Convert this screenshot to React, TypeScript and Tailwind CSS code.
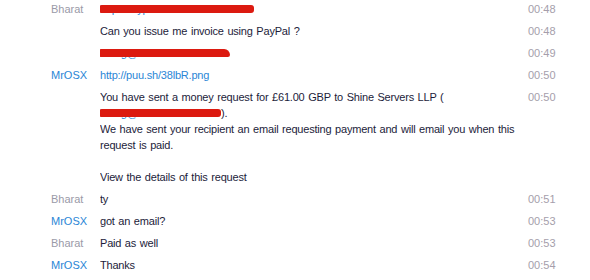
import React from "react";

type Row = {
  name?: string;
  me?: boolean;
  time?: string;
  lines: React.ReactNode[];
};

const Redact = ({ w, top, extra = "" }: { w: number; top: number; extra?: string }) => (
  <span
    className={`absolute left-[-1px] h-[8px] bg-[#dc1a10] rounded-[3px] ${extra}`}
    style={{ width: w, top }}
  />
);

const rows: Row[] = [
  {
    name: "Bharat",
    time: "00:48",
    lines: [
      <span className="relative inline-block text-[#2a86d6]">
        http://tinypic.com/r/9USB-El
        <Redact w={155} top={4} />
      </span>,
    ],
  },
  { time: "00:48", lines: ["Can you issue me invoice using PayPal ?"] },
  {
    time: "00:49",
    lines: [
      <span className="relative inline-block text-[#2a86d6]">
        billing@shineserver
        <Redact w={131} top={4} extra="rounded-tr-[8px]" />
      </span>,
    ],
  },
  {
    name: "MrOSX",
    me: true,
    time: "00:50",
    lines: [<span className="text-[#2a86d6]">http://puu.sh/38lbR.png</span>],
  },
  {
    time: "00:50",
    lines: [
      "You have sent a money request for £61.00 GBP to Shine Servers LLP (",
      <span>
        <span className="relative inline-block w-[121px] text-[#2a86d6]">
          billing@shineserve
          <Redact w={122} top={4} />
        </span>
        ).
      </span>,
      "We have sent your recipient an email requesting payment and will email you when this",
      "request is paid.",
      "\u00a0",
      "View the details of this request",
    ],
  },
  { name: "Bharat", time: "00:51", lines: ["ty"] },
  { name: "MrOSX", me: true, time: "00:53", lines: ["got an email?"] },
  { name: "Bharat", time: "00:53", lines: ["Paid as well"] },
  { name: "MrOSX", me: true, time: "00:54", lines: ["Thanks"] },
];

export default function App() {
  return (
    <div
      className="w-[590px] h-[280px] overflow-hidden bg-white text-[11px] leading-[16px]"
      style={{ fontFamily: '"Liberation Sans", Arial, sans-serif' }}
    >
      <div className="-mt-[2px] flex flex-col">
        {rows.map((r, i) => (
          <div key={i} className="flex py-[3px]">
            <div
              className={`w-[100px] pl-[51px] shrink-0 ${
                r.me ? "text-[#2a86d6]" : "text-[#9a9aa8]"
              }`}
            >
              {r.name ?? ""}
            </div>
            <div className="flex-1 text-[#1c1c3a] tracking-[-0.2px] [word-spacing:0.8px] overflow-hidden">
              {r.lines.map((l, j) => (
                <div key={j} className="whitespace-nowrap">
                  {l}
                </div>
              ))}
            </div>
            <div className="w-[62px] shrink-0 text-[#a59eab]">{r.time}</div>
          </div>
        ))}
      </div>
    </div>
  );
}
